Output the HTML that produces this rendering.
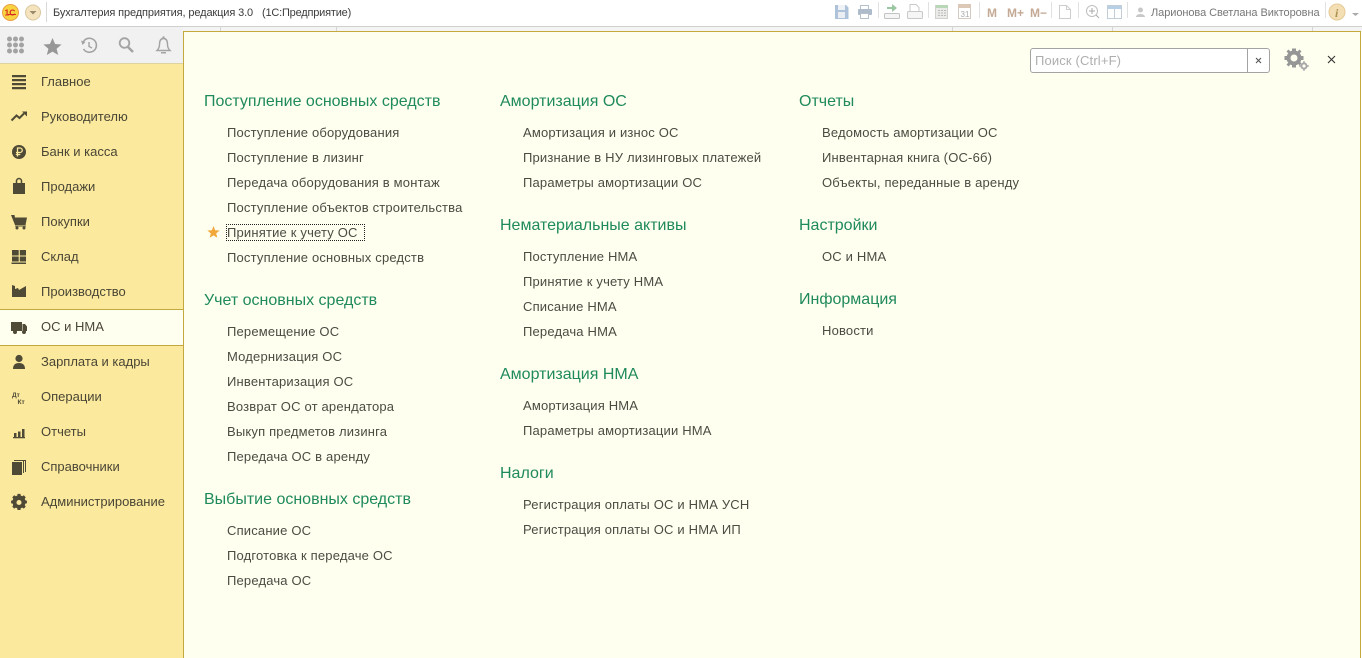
<!DOCTYPE html>
<html lang="ru"><head><meta charset="utf-8"><title>Бухгалтерия предприятия</title>
<style>
html,body{margin:0;padding:0;width:1362px;height:658px;overflow:hidden;background:#fff;font-family:"Liberation Sans",Arial,sans-serif}
.a{position:absolute;white-space:nowrap}
.h{position:absolute;white-space:nowrap;font-size:16px;line-height:20px;color:#1f8a5c;margin-top:2px}
.l{position:absolute;white-space:nowrap;font-size:13px;line-height:18px;color:#4b4b42;letter-spacing:.18px;margin-top:1px}
.n{position:absolute;left:41px;white-space:nowrap;font-size:13px;line-height:18px;color:#4a4636;}
svg{position:absolute;overflow:visible}
</style></head><body>
<div class="a" style="left:0;top:0;width:1362px;height:26px;background:#fff"></div>
<div class="a" style="left:0;top:26px;width:1362px;height:6px;background:#f4f4f4;border-top:1px solid #cfcfcf;box-sizing:border-box"></div>
<div class="a" style="left:220px;top:26px;width:1px;height:6px;background:#d5d5d5"></div>
<div class="a" style="left:336px;top:26px;width:1px;height:6px;background:#d5d5d5"></div>
<div class="a" style="left:952px;top:26px;width:1px;height:6px;background:#d5d5d5"></div>
<div class="a" style="left:1112px;top:26px;width:1px;height:6px;background:#d5d5d5"></div>
<div class="a" style="left:1312px;top:26px;width:1px;height:6px;background:#d5d5d5"></div>

<svg style="left:0;top:0" width="1362" height="26">
<circle cx="10.500" cy="12.500" r="8" fill="#f7d33f" stroke="#eaa04a"/>
<text x="4.500" y="15.500" font-family="Liberation Sans" font-weight="700" font-size="8.500" fill="#d9281e">1С</text>
<path d="M8 14.500h8" stroke="#d9281e" stroke-width="1"/>
<circle cx="33" cy="12.500" r="7.500" fill="#f4e3bd" stroke="#d9c79f"/><path d="M29.500 11h7l-3.500 3.500z" fill="#9a8a6c"/>
<rect x="46" y="2" width="1" height="20" fill="#d9d9d9"/>
<g opacity=".62">
<path d="M835 5h11l2.500 2.500V19H835z" fill="#7e9fc4"/><rect x="838" y="5" width="7" height="5" fill="#e6edf5"/><rect x="838" y="12" width="7" height="6" fill="#dfe6ee"/>
<rect x="860.500" y="5.500" width="8" height="5" fill="#fff" stroke="#8a9aac"/><rect x="858" y="9" width="14" height="6" rx="1" fill="#7b92ac"/><rect x="860.500" y="13.500" width="8" height="5" fill="#fff" stroke="#8a9aac"/>
<rect x="878" y="2" width="1" height="16" fill="#d0d0d0"/>
<path d="M887 7h5V4l5 4-5 4V9h-5z" fill="#5aa568"/><rect x="884.500" y="13.500" width="15" height="5" rx="1" fill="#f0f0f0" stroke="#a0a0a0"/>
<path d="M910 11V4.500h6l3 3V11" fill="#fff" stroke="#a9a9a9"/><rect x="907.500" y="11.500" width="15" height="7" rx="1" fill="#f0f0f0" stroke="#a9a9a9"/>
<rect x="928" y="2" width="1" height="16" fill="#d0d0d0"/>
<rect x="935.500" y="5.500" width="12" height="13" fill="#dfe2dc" stroke="#b3b8b0"/><rect x="936" y="5" width="12" height="3" fill="#8cc08c"/><path d="M938 10.500h8M938 13h8M938 15.500h8" stroke="#8f948c" stroke-dasharray="2 1"/>
<rect x="958.500" y="6.500" width="12" height="12" fill="#fff" stroke="#b9aa9a"/><rect x="958" y="4" width="13" height="4" fill="#c7a88c"/>
<text x="960.500" y="17" font-size="8" font-family="Liberation Sans" fill="#777">31</text>
<rect x="979" y="2" width="1" height="16" fill="#d0d0d0"/>
<rect x="1051" y="2" width="1" height="16" fill="#d0d0d0"/>
<path d="M1059.500 5.500h7l4 4v9h-11zM1066.500 5.500v4h4" fill="#fff" stroke="#b0b0b0"/>
<rect x="1078" y="2" width="1" height="16" fill="#d0d0d0"/>
<circle cx="1092" cy="11" r="5.500" fill="none" stroke="#999"/><path d="M1096 15l3 3M1089 11h6M1092 8v6" stroke="#777"/>
<rect x="1107.500" y="5.500" width="14" height="13" fill="#fff" stroke="#9fb0c0"/><rect x="1108" y="6" width="13" height="3" fill="#8db4d8"/><path d="M1114.500 9v9" stroke="#9fb0c0"/>
<rect x="1127" y="2" width="1" height="16" fill="#d0d0d0"/>
<circle cx="1140.500" cy="10" r="2.500" fill="#a8a8a8"/><path d="M1136 17c0-4 9-4 9 0z" fill="#a8a8a8"/>
<rect x="1325" y="2" width="1" height="16" fill="#d0d0d0"/>
</g>
<text x="987" y="17" font-size="12" font-weight="700" font-family="Liberation Sans" fill="#c4aa95">M</text>
<text x="1007" y="17" font-size="12" font-weight="700" font-family="Liberation Sans" fill="#c4aa95">M+</text>
<text x="1030" y="17" font-size="12" font-weight="700" font-family="Liberation Sans" fill="#c4aa95">M−</text>
<circle cx="1337" cy="12" r="8" fill="#f4dfb4" stroke="#e5c995"/><text x="1335" y="17" font-size="12" font-weight="700" font-style="italic" font-family="Liberation Serif" fill="#ad9150">i</text>
<path d="M1352 13h7l-3.500 3z" fill="#aaa"/>
</svg>
<div class="a" style="left:53px;top:5px;font-size:11px;line-height:16px;color:#3c3c3c;letter-spacing:-.12px">Бухгалтерия предприятия, редакция 3.0</div>
<div class="a" style="left:262px;top:5px;font-size:11px;line-height:16px;color:#3c3c3c;letter-spacing:-.2px">(1С:Предприятие)</div>
<div class="a" style="left:1151px;top:5px;font-size:11px;line-height:16px;color:#777;letter-spacing:-.07px">Ларионова Светлана Викторовна</div>

<!-- sidebar -->
<div class="a" style="left:0;top:27px;width:183px;height:37px;background:#f1f1f1"></div>
<div class="a" style="left:0;top:63px;width:183px;height:595px;background:#fbe99d;border-top:1px solid #ddd2a0;box-sizing:border-box"></div>
<div class="a" style="left:0;top:309px;width:184px;height:37px;background:#fffff0;border-top:1px solid #c4a93f;border-bottom:1px solid #c4a93f;box-sizing:border-box"></div>
<svg style="left:0;top:27px" width="183" height="37">
<g fill="#a3a3a3"><circle cx="9.500" cy="12" r="2.500"/><circle cx="15.500" cy="12" r="2.500"/><circle cx="21.500" cy="12" r="2.500"/><circle cx="9.500" cy="18" r="2.500"/><circle cx="15.500" cy="18" r="2.500"/><circle cx="21.500" cy="18" r="2.500"/><circle cx="9.500" cy="24" r="2.500"/><circle cx="15.500" cy="24" r="2.500"/><circle cx="21.500" cy="24" r="2.500"/></g>
<path d="M52.500 11l2.600 6 6.500.5-5 4.200 1.600 6.300-5.700-3.400-5.700 3.400 1.600-6.300-5-4.200 6.500-.5z" fill="#979797"/>
<path d="M83.500 14.500a7 7 0 1 1 0 7.500" fill="none" stroke="#a3a3a3" stroke-width="1.600"/><path d="M81 13.500l4.500 1.500-3 3z" fill="#a3a3a3"/><path d="M89 15v4.500l3 1.500" fill="none" stroke="#a3a3a3" stroke-width="1.400"/>
<circle cx="124.500" cy="16" r="4.800" fill="none" stroke="#a3a3a3" stroke-width="1.800"/><path d="M128 20l5 5" stroke="#a3a3a3" stroke-width="2.500"/>
<path d="M163.500 11.500c-3.500 0-4 3-4 6 0 3-1 4.500-2.500 6h13c-1.500-1.500-2.500-3-2.500-6 0-3-.5-6-4-6z" fill="none" stroke="#a3a3a3" stroke-width="1.400"/><path d="M161 25h5v1.500h-5z" fill="#a3a3a3"/><circle cx="163.500" cy="10.500" r="1.200" fill="#a3a3a3"/>
</svg>
<svg style="left:0;top:64px" width="40" height="460" fill="#4f4a36">
<path d="M12 11h14v2.200H12zM12 15h14v2.200H12zM12 19h14v2.200H12zM12 23h14v2.200H12z"/>
<path d="M11.500 56.500l5-5 3 2.500 4.500-4.500" fill="none" stroke="#4f4a36" stroke-width="2"/><path d="M22 47.500h5v5z"/>
<circle cx="19" cy="88" r="7"/><path d="M17.500 92.500v-8.500h2.500a2 2 0 0 1 0 4.500h-4M15.800 90.500h4.500" fill="none" stroke="#fbe99d" stroke-width="1.300"/>
<path d="M13 119h12v11H13z"/><path d="M16.500 120v-3a2.500 2.500 0 0 1 5 0v3" fill="none" stroke="#4f4a36" stroke-width="1.500"/>
<path d="M11 151h3.500l.5 2.500h12l-1.500 7.500H15zM15 161.500h11v1H15z"/><circle cx="17" cy="164" r="1.500"/><circle cx="24" cy="164" r="1.500"/>
<path d="M12 186h6.700v5.500H12zM19.800 186h6.200v5.500h-6.200zM12 192.500h6.700v5H12zM19.800 192.500h6.200v5h-6.200zM11.500 198.500h14.500v1.500H11.500z"/>
<path d="M12 233v-12l3 1v3l3-1 1 2 7-4v11z"/>
<path d="M11 258h11v9H11zM22.500 260h2.500l2 2.500v4.500h-4.500z"/><circle cx="15" cy="268" r="2"/><circle cx="24" cy="268" r="2"/>
<circle cx="19" cy="294.500" r="3.600"/><path d="M13 305c0-4 2-6 6-6s6 2 6 6z"/>
<text x="12" y="333" font-size="6.500" font-weight="700" font-family="Liberation Sans">Дт</text><text x="17.500" y="340" font-size="6.500" font-weight="700" font-family="Liberation Sans">Кт</text>
<path d="M14 369h2.500v4H14zM18 367.500h2.500v5.500H18zM22 365h2.500v8H22zM13 373h12v1.200H13z"/>
<path d="M12 398h10v13H12zM23 397h1v12h-1zM14 396h11v1H14zM25 396h1v12h-1z"/>
<g transform="translate(19 438.500) scale(.72) translate(-19 -440)"><path d="M17 428h4l.5 2.500 2 .8 2.200-1.300 2.600 2.700-1.300 2.200.8 2 2.200.6v3.500l-2.200.6-.8 2 1.300 2.200-2.600 2.700-2.200-1.300-2 .8-.5 2.500h-4l-.5-2.500-2-.8-2.200 1.300-2.600-2.700 1.300-2.200-.8-2-2.200-.6v-3.500l2.200-.6.8-2-1.300-2.200 2.600-2.700 2.200 1.300 2-.8z"/><circle cx="19" cy="440" r="3.500" fill="#fbe99d"/></g>
</svg>
<div class="n" style="top:73px">Главное</div><div class="n" style="top:108px">Руководителю</div><div class="n" style="top:143px">Банк и касса</div><div class="n" style="top:178px">Продажи</div><div class="n" style="top:213px">Покупки</div><div class="n" style="top:248px">Склад</div><div class="n" style="top:283px">Производство</div><div class="n" style="top:318px">ОС и НМА</div><div class="n" style="top:353px">Зарплата и кадры</div><div class="n" style="top:388px">Операции</div><div class="n" style="top:423px">Отчеты</div><div class="n" style="top:458px">Справочники</div><div class="n" style="top:493px">Администрирование</div>

<!-- content panel -->
<div class="a" style="left:183px;top:31px;width:1178px;height:627px;background:#fffff0;border:1px solid #c4a93f;border-bottom:0;box-sizing:border-box"></div>
<div class="a" style="left:1030px;top:48px;width:240px;height:25px;background:#fff;border:1px solid #a3a3a3;border-radius:3px;box-sizing:border-box"></div>
<div class="a" style="left:1247px;top:49px;width:1px;height:23px;background:#a3a3a3"></div>
<div class="a" style="left:1035px;top:52px;font-size:13px;line-height:17px;color:#aeaeae;letter-spacing:.15px">Поиск (Ctrl+F)</div>
<svg style="left:1030px;top:45px" width="320" height="35">
<path d="M226 13l5 5M231 13l-5 5" stroke="#555" stroke-width="1.100"/>
<path d="M298 11l7 7M305 11l-7 7" stroke="#333" stroke-width="1.100"/>
<g fill="#969696"><circle cx="264" cy="13" r="5.500" fill="none" stroke="#969696" stroke-width="4"/><path d="M262 3.500h4v3h-4zM262 19.500h4v3h-4zM254.500 11h3v4h-3zM270.500 11h3v4h-3zM256.500 6.500l2-2 2.500 2.500-2 2zM267.500 18l2-2 2 2.500-2 2zM256.500 19.500l2 2 2.500-2.500-2-2zM269.500 4.500l2 2-2.500 2.500-2-2z"/>
<circle cx="274" cy="21" r="2.600" fill="none" stroke="#a8a8a8" stroke-width="2"/><path d="M273.200 16.200h1.600v2h-1.600zM273.200 23.800h1.600v2h-1.600zM269.200 20.200h2v1.600h-2zM276.800 20.200h2v1.600h-2z" fill="#a8a8a8"/></g>
</svg>

<div class="h" style="left:204px;top:90px">Поступление основных средств</div>
<div class="l" style="left:227px;top:123px">Поступление оборудования</div>
<div class="l" style="left:227px;top:148px">Поступление в лизинг</div>
<div class="l" style="left:227px;top:173px">Передача оборудования в монтаж</div>
<div class="l" style="left:227px;top:198px">Поступление объектов строительства</div>
<div class="a" style="left:226px;top:224px;width:139px;height:17px;border:1px dotted #222;box-sizing:border-box"></div>
<div class="l" style="left:227px;top:223px">Принятие к учету ОС</div>
<svg style="left:207px;top:226px" width="13" height="12"><path d="M6.500 0l1.700 4.200 4.500.3-3.500 2.900 1.100 4.400-3.800-2.400-3.800 2.400 1.100-4.400L.3 4.500l4.500-.3z" fill="#f2a93b"/></svg>
<div class="l" style="left:227px;top:248px">Поступление основных средств</div>
<div class="h" style="left:204px;top:289px">Учет основных средств</div>
<div class="l" style="left:227px;top:322px">Перемещение ОС</div>
<div class="l" style="left:227px;top:347px">Модернизация ОС</div>
<div class="l" style="left:227px;top:372px">Инвентаризация ОС</div>
<div class="l" style="left:227px;top:397px">Возврат ОС от арендатора</div>
<div class="l" style="left:227px;top:422px">Выкуп предметов лизинга</div>
<div class="l" style="left:227px;top:447px">Передача ОС в аренду</div>
<div class="h" style="left:204px;top:488px">Выбытие основных средств</div>
<div class="l" style="left:227px;top:521px">Списание ОС</div>
<div class="l" style="left:227px;top:546px">Подготовка к передаче ОС</div>
<div class="l" style="left:227px;top:571px">Передача ОС</div>

<div class="h" style="left:500px;top:90px">Амортизация ОС</div>
<div class="l" style="left:523px;top:123px">Амортизация и износ ОС</div>
<div class="l" style="left:523px;top:148px">Признание в НУ лизинговых платежей</div>
<div class="l" style="left:523px;top:173px">Параметры амортизации ОС</div>
<div class="h" style="left:500px;top:214px">Нематериальные активы</div>
<div class="l" style="left:523px;top:247px">Поступление НМА</div>
<div class="l" style="left:523px;top:272px">Принятие к учету НМА</div>
<div class="l" style="left:523px;top:297px">Списание НМА</div>
<div class="l" style="left:523px;top:322px">Передача НМА</div>
<div class="h" style="left:500px;top:363px">Амортизация НМА</div>
<div class="l" style="left:523px;top:396px">Амортизация НМА</div>
<div class="l" style="left:523px;top:421px">Параметры амортизации НМА</div>
<div class="h" style="left:500px;top:462px">Налоги</div>
<div class="l" style="left:523px;top:495px">Регистрация оплаты ОС и НМА УСН</div>
<div class="l" style="left:523px;top:520px">Регистрация оплаты ОС и НМА ИП</div>

<div class="h" style="left:799px;top:90px">Отчеты</div>
<div class="l" style="left:822px;top:123px">Ведомость амортизации ОС</div>
<div class="l" style="left:822px;top:148px">Инвентарная книга (ОС-6б)</div>
<div class="l" style="left:822px;top:173px">Объекты, переданные в аренду</div>
<div class="h" style="left:799px;top:214px">Настройки</div>
<div class="l" style="left:822px;top:247px">ОС и НМА</div>
<div class="h" style="left:799px;top:288px">Информация</div>
<div class="l" style="left:822px;top:321px">Новости</div>
</body></html>
